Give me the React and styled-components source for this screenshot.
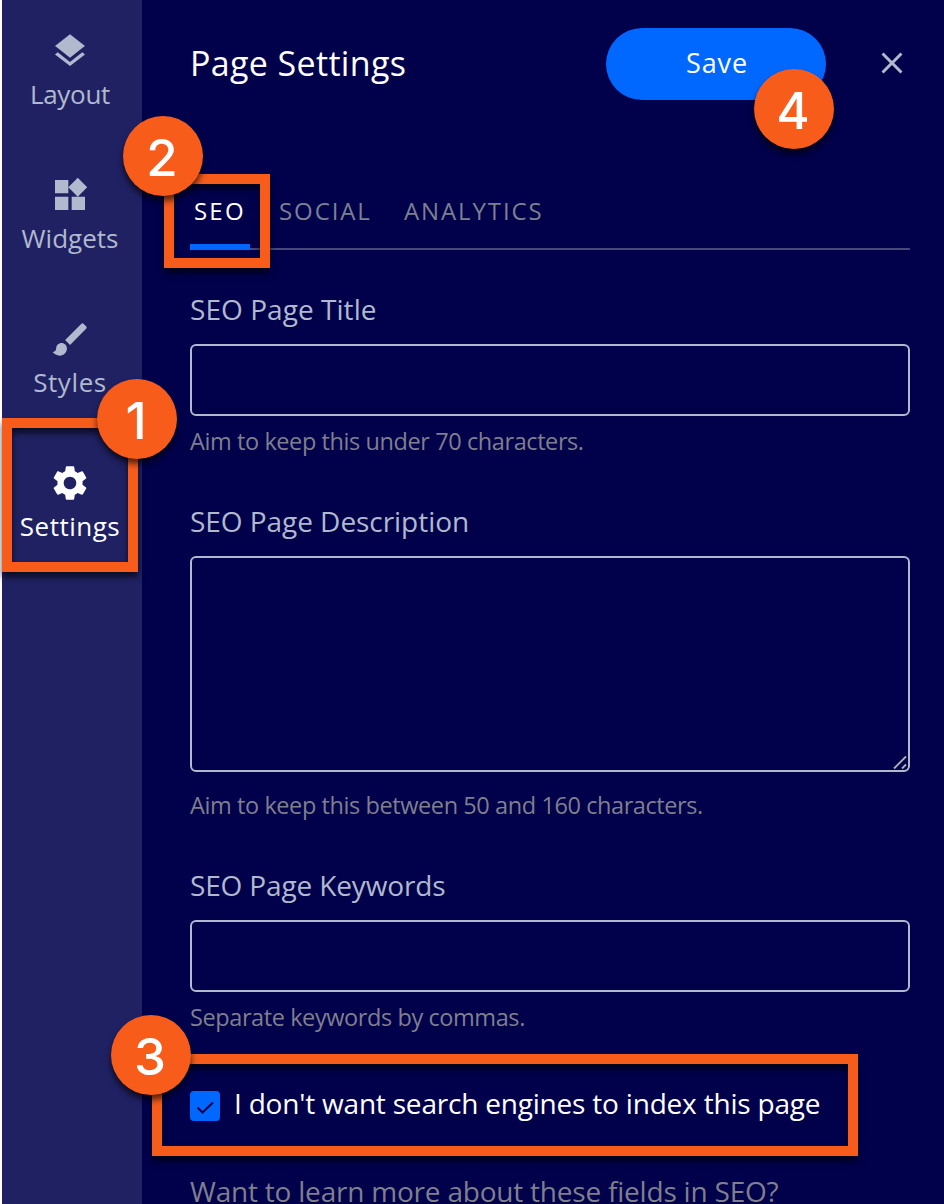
import styled, { createGlobalStyle } from 'styled-components'
import { MdLayers, MdWidgets, MdBrush, MdSettings, MdClose } from 'react-icons/md'


const GlobalStyle = createGlobalStyle`
    *{
        box-sizing: border-box;
    }

    body{
        margin: 0;
        background: #00004b;
        font-family: 'Open Sans', 'Noto Sans', sans-serif;
        overflow: hidden;
    }
`

const Editor = styled.div`
    position: relative;
    display: flex;
    width: 944px;
    height: 1204px;
    overflow: hidden;
    background: #00004b;
`

const Sidebar = styled.nav`
    width: 142px;
    flex: none;
    padding: 31px 4px 0 0;
    border-left: 2px solid #fff;
    background: #202163;
`

const NavItem = styled.div`
    display: flex;
    flex-direction: column;
    align-items: center;
    height: 144px;
    color: ${({ $active }) => ($active ? '#fff' : '#b0b9cd')};
`

const NavIcon = styled.span`
    display: flex;
    align-items: center;
    justify-content: center;
    width: 40px;
    height: 40px;

    svg{
        flex: none;
        width: ${({ $size }) => $size || 40}px;
        height: ${({ $size }) => $size || 40}px;
    }
`

const NavLabel = styled.span`
    margin-top: 5px;
    font-size: 26px;
    line-height: 36px;
    letter-spacing: ${({ $spacing }) => $spacing || 0}px;
    white-space: nowrap;
`

const Panel = styled.main`
    flex: 1;
    min-width: 0;
    padding: 28px 34px 0 48px;
`

const Header = styled.header`
    display: flex;
    align-items: center;
    height: 72px;
`

const Title = styled.h1`
    flex: 1;
    margin: 0;
    padding-bottom: 2px;
    font-size: 34px;
    font-weight: 400;
    line-height: 70px;
    letter-spacing: 0.35px;
    color: #fff;
`

const SaveButton = styled.button`
    width: 220px;
    height: 72px;
    padding: 0 0 4px 2px;
    border: 0;
    border-radius: 36px;
    background: #0068ff;
    color: #fff;
    font-family: inherit;
    font-size: 27px;
    letter-spacing: 0.9px;
`

const CloseButton = styled.button`
    display: flex;
    margin: 0 0 2px 48px;
    padding: 0;
    border: 0;
    background: none;
    color: #b0b9cd;

    svg{
        width: 36px;
        height: 36px;
    }
`

const Tabs = styled.div`
    display: flex;
    height: 66px;
    margin-top: 84px;
    border-bottom: 2px solid #45477d;
`

const Tab = styled.div`
    height: 66px;
    padding: 0 4px;
    margin-right: 25px;
    border-bottom: ${({ $active }) => ($active ? '6px solid #0068ff' : '0')};
    color: ${({ $active }) => ($active ? '#fff' : '#7b8190')};
    font-size: 24px;
    line-height: 54px;
    letter-spacing: ${({ $spacing }) => $spacing}px;
    width: ${({ $width }) => $width}px;
    white-space: nowrap;
`

const Field = styled.div`
    display: flex;
    flex-direction: column;
    margin-bottom: 42px;

    ${Tabs} + &{
        margin-top: 39px;
    }
`

const Label = styled.label`
    margin-bottom: 15px;
    font-size: 28px;
    line-height: 40px;
    letter-spacing: ${({ $spacing }) => $spacing || 0}px;
    color: #b0b9cd;
`

const Input = styled.input`
    height: 72px;
    border: 2px solid #b0b9cd;
    border-radius: 6px;
    background: transparent;
`

const TextAreaWrap = styled.div`
    position: relative;
    height: 216px;
    margin-bottom: 8px;
`

const TextArea = styled.textarea`
    display: block;
    width: 100%;
    height: 100%;
    border: 2px solid #b0b9cd;
    border-radius: 6px;
    background: transparent;
    resize: none;
`

const ResizeGrip = styled.svg`
    position: absolute;
    right: 2px;
    bottom: 2px;
    width: 16px;
    height: 16px;
`

const Hint = styled.p`
    margin: 7px 0 0;
    font-size: 23.5px;
    line-height: 36px;
    letter-spacing: -0.41px;
    color: #7f7f8d;
    white-space: nowrap;
`

const CheckRow = styled.label`
    display: flex;
    align-items: center;
    height: 40px;
    margin-top: 48px;
    color: #fff;
    font-size: 28px;
    line-height: 40px;
    letter-spacing: -0.2px;
    white-space: nowrap;
`

const CheckBox = styled.span`
    width: 30px;
    height: 30px;
    margin: 6px 14px 0 0;
    border-radius: 4px;
    background: #0068ff;

    svg{
        display: block;
    }
`

const LearnMore = styled.p`
    margin: 48px 0 0;
    font-size: 28px;
    line-height: 40px;
    letter-spacing: -0.21px;
    color: #7f7f8d;
    white-space: nowrap;
`

const Highlight = styled.div`
    position: absolute;
    left: ${({ $x }) => $x}px;
    top: ${({ $y }) => $y}px;
    width: ${({ $w }) => $w}px;
    height: ${({ $h }) => $h}px;
    border: 10px solid #f75c1b;
    filter: drop-shadow(0 5px 3px rgba(0, 0, 0, 0.65));
    pointer-events: none;
`

const StepBadge = styled.div`
    position: absolute;
    left: ${({ $x }) => $x}px;
    top: ${({ $y }) => $y}px;
    display: flex;
    align-items: center;
    justify-content: center;
    width: 80px;
    height: 80px;
    padding: 4px 2px 0 0;
    border-radius: 50%;
    background: #f75c1b;
    box-shadow: 0 5px 6px rgba(0, 0, 0, 0.65);
    color: #fff;
    font-family: Inter, 'Liberation Sans', sans-serif;
    font-size: 51px;
    font-weight: 500;
    line-height: 76px;
`

const navItems = [
    { label: 'Layout', icon: MdLayers, spacing: -0.3 },
    { label: 'Widgets', icon: MdWidgets },
    { label: 'Styles', icon: MdBrush, size: 43, spacing: 0.6 },
    { label: 'Settings', icon: MdSettings, size: 42, active: true, spacing: 0.5 },
]

const highlights = [
    { x: 2, y: 418, w: 136, h: 154 },
    { x: 164, y: 174, w: 106, h: 94 },
    { x: 152, y: 1054, w: 706, h: 102 },
]

const steps = [
    { n: 1, x: 97, y: 379 },
    { n: 2, x: 123, y: 116 },
    { n: 3, x: 111, y: 1015 },
    { n: 4, x: 754, y: 69 },
]

function App(){
    return(
    <>
        <GlobalStyle/>
        <Editor>
            <Sidebar>
                {navItems.map(({ label, icon: Icon, size, active, spacing }) => (
                    <NavItem key={label} $active={active}>
                        <NavIcon $size={size}><Icon/></NavIcon>
                        <NavLabel $spacing={spacing}>{label}</NavLabel>
                    </NavItem>
                ))}
            </Sidebar>
            <Panel>
                <Header>
                    <Title>Page Settings</Title>
                    <SaveButton>Save</SaveButton>
                    <CloseButton aria-label="Close"><MdClose/></CloseButton>
                </Header>
                <Tabs>
                    <Tab $active $width={60} $spacing={2.2}>SEO</Tab>
                    <Tab $width={100} $spacing={1.9}>SOCIAL</Tab>
                    <Tab $width={150} $spacing={1.9}>ANALYTICS</Tab>
                </Tabs>
                <Field>
                    <Label $spacing={0.05}>SEO Page Title</Label>
                    <Input/>
                    <Hint>Aim to keep this under 70 characters.</Hint>
                </Field>
                <Field>
                    <Label $spacing={-0.05}>SEO Page Description</Label>
                    <TextAreaWrap>
                        <TextArea/>
                        <ResizeGrip viewBox="0 0 16 16" fill="none" stroke="#b0b0bb" strokeWidth="1.8">
                            <path d="M2 14.5 14 2.5M10 14.5l4-4"/>
                        </ResizeGrip>
                    </TextAreaWrap>
                    <Hint>Aim to keep this between 50 and 160 characters.</Hint>
                </Field>
                <Field>
                    <Label $spacing={-0.15}>SEO Page Keywords</Label>
                    <Input/>
                    <Hint>Separate keywords by commas.</Hint>
                    <CheckRow>
                        <CheckBox>
                            <svg width="30" height="30" viewBox="0 0 30 30" fill="none" stroke="#00004b" strokeWidth="2">
                                <path d="M7.5 16.5l5 5L23 11.5"/>
                            </svg>
                        </CheckBox>
                        I don't want search engines to index this page
                    </CheckRow>
                    <LearnMore>Want to learn more about these fields in SEO?</LearnMore>
                </Field>
            </Panel>
            {highlights.map(({ x, y, w, h }) => (
                <Highlight key={y} $x={x} $y={y} $w={w} $h={h}/>
            ))}
            {steps.map(({ n, x, y }) => (
                <StepBadge key={n} $x={x} $y={y}>{n}</StepBadge>
            ))}
        </Editor>
    </>
    )
}

export default App
